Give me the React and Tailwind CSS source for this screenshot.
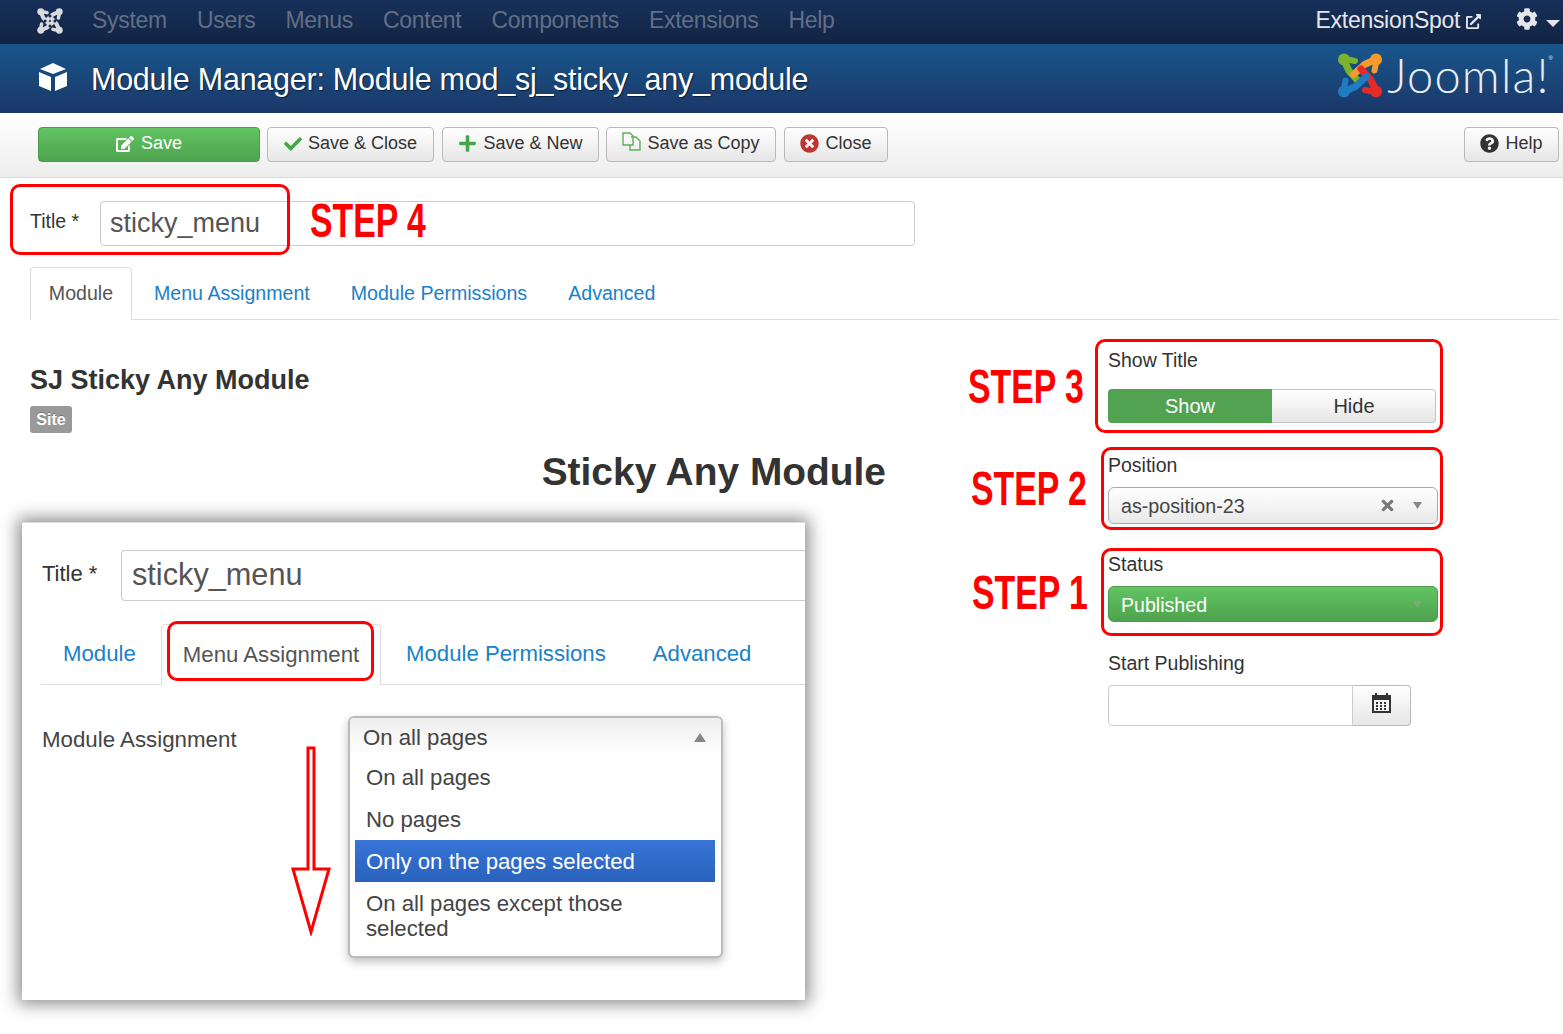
import { FaEdit, FaCheck, FaPlus, FaTimesCircle, FaQuestionCircle, FaCog, FaExternalLinkAlt, FaTimes } from 'react-icons/fa';

// joomla mark: one arm, rotated four times
function JoomlaMark({ colors, holes, className }) {
  return (
    <svg viewBox="0 0 44 45" className={className}>
      {colors.map((c, i) => (
        <g key={i} transform={`rotate(${i * 90} 22 22.5)`}>
          <circle cx="6" cy="6.5" r="6" fill={c} />
          <path d="M17 8 L7 6" fill="none" stroke={c} strokeWidth="6" strokeLinecap="round" />
          <path d="M6 7 L11 18 L21 29" fill="none" stroke={c} strokeWidth="7" strokeLinecap="round" strokeLinejoin="round" />
        </g>
      ))}
      {holes && holes.map((h) => <circle key={h[0] + '-' + h[1]} cx={h[0]} cy={h[1]} r="2.6" fill="#15294d" />)}
    </svg>
  );
}

function ToolButton({ children, className }) {
  return (
    <button className={`h-[35px] pb-[1px] flex items-center justify-center gap-[6px] rounded-[4px] border border-[#b9b9b9] bg-linear-to-b from-white to-[#e6e6e6] text-[18px] text-[#333] ${className}`}>
      {children}
    </button>
  );
}

function Step({ label, className }) {
  return (
    <div className={`absolute origin-left scale-x-[0.69] whitespace-nowrap font-bold text-[49px] leading-none text-[#f00] ${className}`}>
      {label}
    </div>
  );
}

function RedBox({ className }) {
  return <div className={`absolute pointer-events-none border-[3px] border-[#f00] rounded-[10px] ${className}`} />;
}

function Triangle({ up, className }) {
  return (
    <svg viewBox="0 0 10 8" preserveAspectRatio="none" className={className}>
      <path d={up ? 'M5 0 L10 8 L0 8Z' : 'M0 0 L10 0 L5 8Z'} fill="currentColor" />
    </svg>
  );
}

export default function App() {
  const menu = ['System', 'Users', 'Menus', 'Content', 'Components', 'Extensions', 'Help'];

  return (
    <div className="relative w-[1563px] h-[1034px] overflow-hidden bg-white font-['Liberation_Sans',Arial,sans-serif] text-[#333]">
      {/* top nav */}
      <div className="h-[44px] flex items-center bg-linear-to-b from-[#17305a] to-[#122443] pl-[37px] pr-[3px]">
        <JoomlaMark
          colors={['#d9dadd', '#d9dadd', '#d9dadd', '#d9dadd']}
          holes={[[22, 14], [22, 31], [13.5, 22.5], [30.5, 22.5]]}
          className="w-[26px] h-[26px] -translate-y-[1px]"
        />
        <div className="ml-[29px] pb-[4px] flex gap-[30px] text-[23px] tracking-[-0.3px] text-[#626f85]">
          {menu.map((m) => <span key={m}>{m}</span>)}
        </div>
        <div className="ml-auto pb-[4px] flex items-center text-[23px] tracking-[-0.3px] text-[#e4e6e9]">
          ExtensionSpot
          <FaExternalLinkAlt className="ml-[6px] text-[15px] translate-y-[1px]" />
          <FaCog className="ml-[35px] text-[22px] -translate-y-[1px]" />
          <Triangle className="ml-[8px] w-[14px] h-[7px] translate-y-[3px]" />
        </div>
      </div>

      {/* title bar */}
      <div className="h-[69px] flex items-center bg-linear-to-b from-[#17568c] to-[#1a3768] pl-[39px] pr-[10px] text-white">
        <svg viewBox="0 0 28 28" className="w-[28px] h-[28px] fill-white -translate-y-[2px]">
          <path d="M14 0 L27 6 L14 11 L1 6Z M0 9 L12 14 V28 L0 23Z M28 9 L16 14 V28 L28 23Z" />
        </svg>
        <h1 className="ml-[24px] text-[30.5px] tracking-[-0.25px] [text-shadow:1px_1px_1px_#0a1f3c] translate-y-[1px]">
          Module Manager: Module mod_sj_sticky_any_module
        </h1>
        <div className="ml-auto flex items-center -translate-y-[3px]">
          <JoomlaMark colors={['#7ab42c', '#f59b2c', '#e52a2a', '#1f7cc2']} className="w-[44px] h-[45px] -translate-x-[2px]" />
          <span className="ml-[3px] font-['Lato',sans-serif] font-light text-[47px] tracking-[1.2px] leading-none text-[#e8edf3]">Joomla!</span>
          <span className="self-start mt-[3px] -ml-[1px] text-[6px] leading-none text-[#e8edf3]">®</span>
        </div>
      </div>

      {/* toolbar */}
      <div className="h-[65px] pb-[2px] flex items-center bg-linear-to-b from-white to-[#eeeeee] border-b border-[#dcdcdc] pl-[38px] pr-[4px]">
        <button className="w-[222px] h-[35px] pb-[1px] flex items-center justify-center gap-[7px] rounded-[4px] border border-[#4b9a4b] bg-linear-to-b from-[#62c462] to-[#4ea34e] text-[18px] text-white">
          <FaEdit className="text-[18px]" /> Save
        </button>
        <ToolButton className="ml-[7px] w-[167px]">
          <FaCheck className="text-[18px] text-[#46a546]" /> Save &amp; Close
        </ToolButton>
        <ToolButton className="ml-[8px] w-[157px]">
          <FaPlus className="text-[19px] text-[#46a546]" /> Save &amp; New
        </ToolButton>
        <ToolButton className="ml-[7px] w-[170px]">
          <svg viewBox="0 0 19 19" className="w-[19px] h-[19px] -translate-y-[2px]" fill="none" stroke="#5cb05c" strokeWidth="1.4">
            <path d="M1 1 H8 L11 4 V13 H1Z" />
            <path d="M9 5 H14 L18 9 V18 H8 V13" />
          </svg>
          Save as Copy
        </ToolButton>
        <ToolButton className="ml-[8px] w-[104px]">
          <FaTimesCircle className="text-[19px] text-[#bd362f]" /> Close
        </ToolButton>
        <ToolButton className="ml-auto w-[95px]">
          <FaQuestionCircle className="text-[19px] text-[#333]" /> Help
        </ToolButton>
      </div>

      {/* title field */}
      <div className="relative flex items-center ml-[30px] mt-[23px] w-[885px]">
        <label className="w-[70px] pb-[3px] text-[19.5px] leading-none">Title *</label>
        <div className="flex-1 h-[45px] flex items-center rounded-[4px] border border-[#ccc] pl-[9px] text-[27px] text-[#555]">sticky_menu</div>
        <RedBox className="-left-[20px] -top-[17px] w-[280px] h-[71px]" />
        <Step label="STEP 4" className="left-[280px] top-[-5px]" />
      </div>

      {/* tabs */}
      <div className="ml-[30px] mr-[4px] mt-[21px] h-[53px] flex border-b border-[#ddd] text-[19.6px] leading-none">
        <div className="w-[102px] h-[53px] flex items-center justify-center rounded-t-[4px] border border-b-0 border-[#ddd] bg-white text-[#555]">Module</div>
        <div className="ml-[22px] pt-[1px] flex items-center text-[#1a81c9]">Menu Assignment</div>
        <div className="ml-[41px] pt-[1px] flex items-center text-[#1a81c9]">Module Permissions</div>
        <div className="ml-[41px] pt-[1px] flex items-center text-[#1a81c9]">Advanced</div>
      </div>

      <div className="flex pl-[30px]">
        {/* left column */}
        <div className="w-[1078px]">
          <h2 className="mt-[42px] text-[27px] leading-[36px] font-bold">SJ Sticky Any Module</h2>
          <span className="mt-[8px] flex items-center justify-center w-[42px] h-[27px] rounded-[3px] bg-[#999] text-[16px] font-bold text-white [text-shadow:0_-1px_0_rgba(0,0,0,0.25)]">Site</span>
          <h2 className="mt-[14px] w-[856px] text-right text-[38.9px] leading-[50px] font-bold">Sticky Any Module</h2>

          {/* pasted screenshot */}
          <div className="relative mt-[25px] -ml-[8px] w-[783px] h-[478px] bg-white border-t border-[#ddd] shadow-[0_0_16px_4px_rgba(0,0,0,0.45)]">
            <div className="flex items-center pl-[20px] pt-[27px]">
              <label className="w-[79px] pb-[3px] text-[22px] leading-none text-[#333]">Title *</label>
              <div className="flex-1 h-[51px] flex items-center rounded-l-[4px] border border-r-0 border-[#ccc] pl-[10px] text-[30.7px] text-[#555]">sticky_menu</div>
            </div>

            <div className="relative ml-[19px] mt-[23px] h-[61px] flex border-b border-[#ddd] text-[22.2px] leading-none">
              <div className="w-[120px] pl-[22px] pt-[1px] flex items-center text-[#1a81c9]">Module</div>
              <div className="w-[220px] h-[61px] flex items-center justify-center rounded-t-[4px] border border-b-0 border-[#ddd] bg-white text-[#555]">Menu Assignment</div>
              <div className="ml-[25px] pt-[1px] flex items-center text-[#1a81c9]">Module Permissions</div>
              <div className="ml-[47px] pt-[1px] flex items-center text-[#1a81c9]">Advanced</div>
              <RedBox className="left-[126px] -top-[3px] w-[207px] h-[60px]" />
            </div>

            <div className="flex pl-[20px] pt-[31px]">
              <div className="w-[306px] pt-[13px] text-[22.3px] leading-none text-[#444]">Module Assignment</div>
              <div className="w-[375px] h-[242px] rounded-[6px] border-2 border-[#bbb] shadow-[0_4px_10px_rgba(0,0,0,0.25)] bg-white text-[22.2px] leading-[25px] text-[#444]">
                <div className="h-[38px] flex items-center justify-between pl-[13px] pr-[15px] rounded-t-[4px] bg-linear-to-b from-[#eee] to-white">
                  On all pages
                  <Triangle up className="w-[12px] h-[9px] text-[#888]" />
                </div>
                <div className="pl-[5px] pr-[6px]">
                  <div className="h-[42px] flex items-center pl-[11px]">On all pages</div>
                  <div className="h-[42px] flex items-center pl-[11px]">No pages</div>
                  <div className="h-[42px] flex items-center pl-[11px] bg-linear-to-b from-[#3875d7] to-[#2a62bc] text-white">Only on the pages selected</div>
                  <div className="pt-[9px] pl-[11px]">On all pages except those<br />selected</div>
                </div>
              </div>
            </div>

            <svg viewBox="0 0 40 190" className="absolute left-[269px] top-[223px] w-[40px] h-[190px]" fill="white" stroke="#f00" strokeWidth="3">
              <path d="M17 2 H23 V123 H38 L20 186 L2 123 H17Z" />
            </svg>
          </div>
        </div>

        {/* right column */}
        <div className="w-[340px] pt-[29px] text-[19.5px] leading-[22px]">
          <div className="relative">
            <div>Show Title</div>
            <div className="mt-[18px] w-[328px] h-[35px] pb-[1px] flex text-[20px]">
              <div className="w-[164px] flex items-center justify-center rounded-l-[4px] bg-[#51a351] text-white">Show</div>
              <div className="flex-1 pl-[1px] flex items-center justify-center rounded-r-[4px] border border-l-0 border-[#c4c4c4] bg-linear-to-b from-white to-[#e6e6e6]">Hide</div>
            </div>
            <RedBox className="-top-[10px] -left-[13px] w-[348px] h-[94px]" />
            <Step label="STEP 3" className="-left-[140px] top-[13px]" />
          </div>

          <div className="relative mt-[30px]">
            <div>Position</div>
            <div className="mt-[11px] w-[330px] h-[37px] flex items-center rounded-[6px] border border-[#aaa] bg-linear-to-b from-white via-[#f4f4f4] to-[#e8e8e8] pl-[12px] pr-[15px] text-[19.7px] text-[#444]">
              as-position-23
              <FaTimes className="ml-auto text-[17px] text-[#777]" />
              <Triangle className="ml-[17px] w-[9px] h-[7px] text-[#888]" />
            </div>
            <RedBox className="-top-[7px] -left-[7px] w-[342px] h-[83px]" />
            <Step label="STEP 2" className="-left-[137px] top-[10px]" />
          </div>

          <div className="relative mt-[29px]">
            <div>Status</div>
            <div className="mt-[11px] w-[330px] h-[36px] pt-[1px] flex items-center justify-between rounded-[6px] border border-[#4b9a4b] bg-linear-to-b from-[#62c462] to-[#4ea34e] pl-[12px] pr-[15px] text-[19.6px] text-white">
              Published
              <Triangle className="w-[9px] h-[7px] text-[#7fa87f]" />
            </div>
            <RedBox className="-top-[5px] -left-[7px] w-[342px] h-[88px]" />
            <Step label="STEP 1" className="-left-[136px] top-[15px]" />
          </div>

          <div className="mt-[30px]">
            <div>Start Publishing</div>
            <div className="mt-[11px] w-[303px] h-[41px] flex">
              <div className="flex-1 rounded-l-[4px] border border-[#ccc] bg-white" />
              <div className="w-[58px] pb-[5px] flex items-center justify-center rounded-r-[4px] border border-l-0 border-[#bbb] bg-linear-to-b from-white to-[#e6e6e6]">
                <svg viewBox="0 0 19 20" className="w-[19px] h-[20px]">
                  <path d="M3 0h2v2H3z M14 0h2v2h-2z" fill="#333" />
                  <path d="M0 2 H19 V20 H0Z M2 7 V18 H17 V7Z" fill="#333" fillRule="evenodd" />
                  <path d="M4 9h2v2H4z M8 9h2v2H8z M12 9h2v2h-2z M4 12h2v2H4z M8 12h2v2H8z M12 12h2v2h-2z M4 15h2v2H4z M8 15h2v2H8z M12 15h2v2h-2z" fill="#333" />
                </svg>
              </div>
            </div>
          </div>
        </div>
      </div>
    </div>
  );
}
